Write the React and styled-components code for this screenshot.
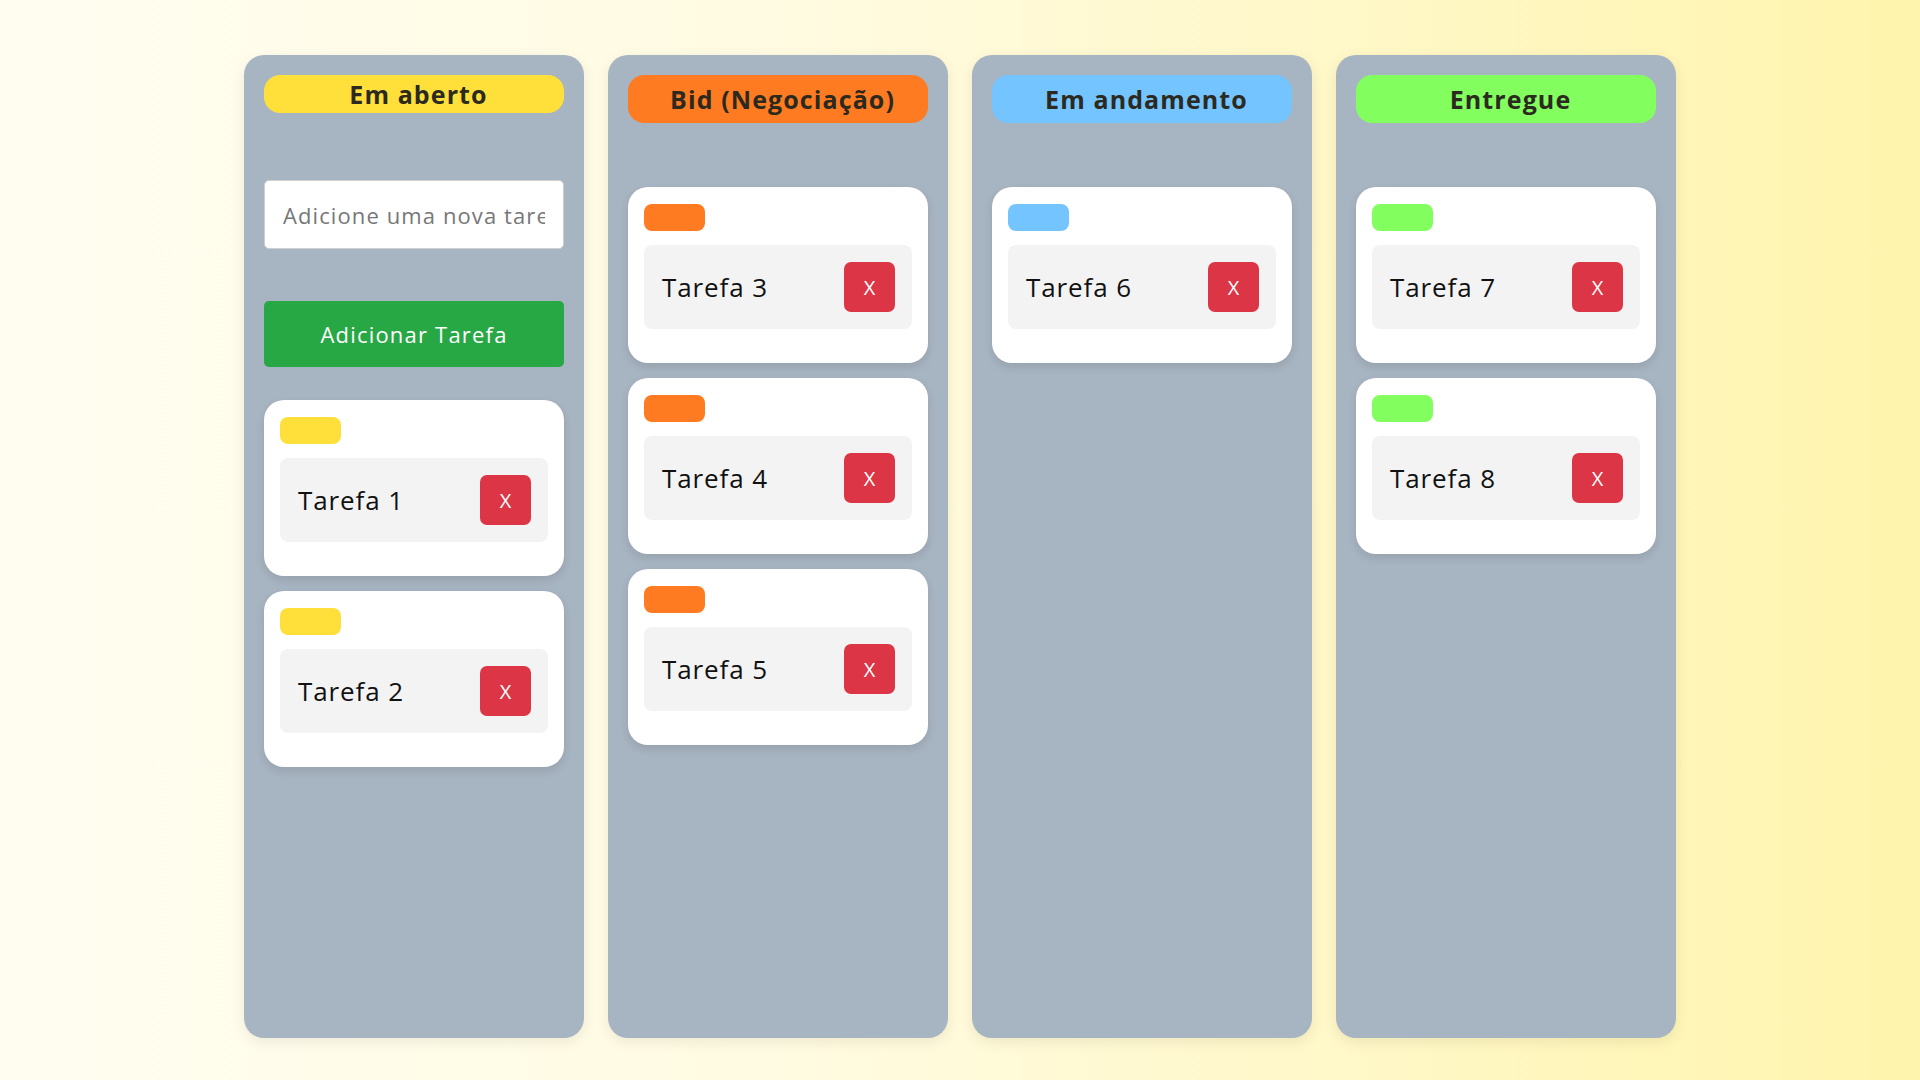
import React from "react";
import styled, { createGlobalStyle } from "styled-components";

const GlobalStyle = createGlobalStyle`
  html, body { margin: 0; padding: 0; }
  body {
    font-family: "Open Sans", "Liberation Sans", sans-serif;
    background: linear-gradient(90deg, #fffdf0 0%, #fffbe2 40%, #fff4ad 100%);
    min-height: 100vh;
  }
  * { box-sizing: border-box; }
`;

const Page = styled.div`
  min-height: 100vh;
  display: flex;
  justify-content: center;
  align-items: flex-start;
  gap: 24px;
  padding-top: 55px;
`;

const Column = styled.div`
  width: 340px;
  height: 983px;
  background: #a7b4c1;
  border-radius: 20px;
  padding: 20px;
  display: flex;
  flex-direction: column;
  box-shadow: 0 4px 14px rgba(0, 0, 0, 0.08);
`;

const Header = styled.div`
  height: ${(p) => p.$h}px;
  margin-bottom: ${(p) => p.$mb}px;
  background: ${(p) => p.$color};
  border-radius: 16px;
  display: flex;
  align-items: center;
  justify-content: center;
  padding-left: 9px;
  font-weight: 700;
  font-size: 25px;
  color: #2c2a1f;
  letter-spacing: 1.1px;
  flex-shrink: 0;
`;

const Input = styled.input`
  height: 69px;
  margin-bottom: 52px;
  width: 100%;
  border: 1px solid #cfcfcf;
  border-radius: 5px;
  background: #fff;
  padding: 0 18px;
  font-family: inherit;
  font-size: 22px;
  letter-spacing: 1.1px;
  color: #333;
  outline: none;
  &::placeholder { color: #777; }
`;

const AddButton = styled.button`
  height: 66px;
  margin-bottom: 33px;
  width: 100%;
  border: none;
  border-radius: 5px;
  background: #28a745;
  color: #fff;
  font-family: inherit;
  font-size: 22px;
  letter-spacing: 1.2px;
  cursor: pointer;
`;

const Card = styled.div`
  background: #fff;
  border-radius: 20px;
  padding: 17px 16px 34px 16px;
  margin-bottom: 15px;
  box-shadow: 0 4px 10px rgba(0, 0, 0, 0.1);
  flex-shrink: 0;
`;

const Tag = styled.div`
  width: 61px;
  height: 27px;
  border-radius: 8px;
  background: ${(p) => p.$color};
  margin-bottom: 14px;
`;

const Row = styled.div`
  height: 84px;
  background: #f3f3f3;
  border-radius: 8px;
  padding: 0 17px 0 18px;
  display: flex;
  align-items: center;
  justify-content: space-between;
`;

const TaskName = styled.span`
  font-size: 26px;
  letter-spacing: 0.9px;
  color: #111;
`;

const DeleteButton = styled.button`
  width: 51px;
  height: 50px;
  border: none;
  border-radius: 7px;
  background: #dc3545;
  color: #fff;
  font-family: inherit;
  font-size: 20px;
  cursor: pointer;
`;

const columns = [
  { title: "Em aberto", color: "#ffe03b", tasks: ["Tarefa 1", "Tarefa 2"], form: true },
  { title: "Bid (Negociação)", color: "#ff7b22", tasks: ["Tarefa 3", "Tarefa 4", "Tarefa 5"] },
  { title: "Em andamento", color: "#74c4ff", tasks: ["Tarefa 6"] },
  { title: "Entregue", color: "#82ff5e", tasks: ["Tarefa 7", "Tarefa 8"] },
];

export default function App() {
  return (
    <>
      <GlobalStyle />
      <Page>
        {columns.map((col) => (
          <Column key={col.title}>
            <Header $color={col.color} $h={col.form ? 38 : 48} $mb={col.form ? 67 : 64}>
              {col.title}
            </Header>
            {col.form && (
              <>
                <Input placeholder="Adicione uma nova tarefa" />
                <AddButton>Adicionar Tarefa</AddButton>
              </>
            )}
            {col.tasks.map((t) => (
              <Card key={t}>
                <Tag $color={col.color} />
                <Row>
                  <TaskName>{t}</TaskName>
                  <DeleteButton>X</DeleteButton>
                </Row>
              </Card>
            ))}
          </Column>
        ))}
      </Page>
    </>
  );
}
